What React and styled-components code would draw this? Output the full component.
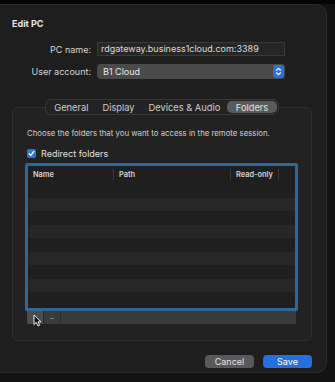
import React from 'react';
import styled, { createGlobalStyle } from 'styled-components';

const GlobalStyle = createGlobalStyle`
    html, body {
        margin: 0;
        padding: 0;
        background: #101010;
    }
    body {
        font-family: Inter, "Liberation Sans", sans-serif;
        color: #dedede;
        -webkit-font-smoothing: antialiased;
    }
`;

const Screen = styled.div`
    width: 335px;
    height: 382px;
    padding-top: 4px;
    box-sizing: border-box;
    background: linear-gradient(to bottom, #050505 0, #050505 4px, #121212 4px);
`;

const Window = styled.div`
    width: 327px;
    height: 369px;
    box-sizing: border-box;
    padding: 0 14px 0 12px;
    background: #1e1e1e;
    border: 1px solid #2c2c2c;
    border-left: none;
    border-radius: 0 11px 11px 0;
    display: flex;
    flex-direction: column;
`;

const Title = styled.div`
    margin-top: 13px;
    height: 12px;
    line-height: 12px;
    font-size: 9px;
    font-weight: 700;
    color: #e6e6e6;
`;

const Form = styled.div`
    margin-top: 12px;
    display: grid;
    grid-template-columns: 79px 188px;
    column-gap: 6px;
    row-gap: 8px;
    align-items: center;
`;

const Label = styled.div`
    text-align: right;
    font-size: 9px;
    color: #d6d6d6;
`;

const TextField = styled.div`
    height: 14px;
    box-sizing: border-box;
    padding: 0 3px;
    background: #262626;
    border: 1px solid #3a3a3a;
    font-size: 9px;
    line-height: 12px;
    color: #dcdcdc;
`;

const Popup = styled.div`
    height: 15px;
    box-sizing: border-box;
    padding: 0 1px 0 6px;
    background: #4a4a4a;
    border-radius: 4px;
    display: flex;
    align-items: center;
    justify-content: space-between;
    font-size: 9px;
    color: #e8e8e8;
`;

const Stepper = styled.div`
    width: 11px;
    height: 13px;
    border-radius: 3px;
    background: #2b6fe0;
    display: flex;
    align-items: center;
    justify-content: center;
`;

const TabWrap = styled.div`
    margin-top: 20px;
    display: flex;
    justify-content: center;
    position: relative;
    z-index: 1;
`;

const Tabs = styled.div`
    height: 16px;
    box-sizing: border-box;
    padding: 1px;
    display: flex;
    align-items: stretch;
    background: #232323;
    border: 1px solid #393939;
    border-radius: 6px;
`;

const Tab = styled.div`
    padding: 0 ${p => p.$pad || 7}px;
    display: flex;
    align-items: center;
    font-size: 9.3px;
    color: ${p => p.$active ? '#e2e2e2' : '#cdcdcd'};
    background: ${p => p.$active ? '#5b5b5b' : 'transparent'};
    border-radius: 5px;
`;

const GroupBox = styled.div`
    margin-top: -8px;
    height: 234px;
    box-sizing: border-box;
    padding: 20px 13px 0 12px;
    background: #222222;
    border: 1px solid #2f2f2f;
    border-radius: 6px;
    display: flex;
    flex-direction: column;
`;

const Hint = styled.div`
    padding-left: 2px;
    height: 10px;
    line-height: 10px;
    font-size: 7.8px;
    color: #cfcfcf;
    white-space: nowrap;
`;

const CheckRow = styled.div`
    margin-top: 9px;
    height: 12px;
    padding-left: 2px;
    display: flex;
    align-items: center;
    gap: 5px;
    font-size: 9px;
    color: #e0e0e0;
`;

const CheckBox = styled.div`
    width: 9px;
    height: 9px;
    border-radius: 2px;
    background: #2a76e0;
    display: flex;
    align-items: center;
    justify-content: center;
`;

const Table = styled.div`
    margin-top: 4px;
    height: 148px;
    box-sizing: border-box;
    border: 3px solid #2d689c;
    border-radius: 2px;
    background: #1f1f1f;
    overflow: hidden;
`;

const HeaderRow = styled.div`
    height: 18px;
    display: grid;
    grid-template-columns: 86px 117px 48px 1fr;
    align-items: start;
`;

const HeaderCell = styled.div`
    height: 11px;
    margin-top: 3px;
    padding-left: 5px;
    font-size: 7.4px;
    line-height: 11px;
    font-weight: 600;
    color: #d4d4d4;
    border-right: ${p => p.$last ? 'none' : '1px solid #3a3a3a'};
`;

const Row = styled.div`
    height: 13.5px;
    background: ${p => p.$odd ? '#272727' : '#1f1f1f'};
`;

const ButtonBar = styled.div`
    margin: 0 2px;
    height: 13px;
    display: flex;
    background: #3a3a3a;
    position: relative;
`;

const BarButton = styled.div`
    width: 16px;
    display: flex;
    align-items: center;
    justify-content: center;
    font-size: 9px;
    color: #8a8a8a;
    background: ${p => p.$hover ? '#4c4c4c' : '#3a3a3a'};
    border-right: 1px solid #2c2c2c;
`;

const Cursor = styled.svg`
    position: absolute;
    left: 6px;
    top: 3px;
`;

const Footer = styled.div`
    margin-top: 14px;
    display: flex;
    justify-content: flex-end;
    gap: 9px;
`;

const Button = styled.div`
    width: 49px;
    height: 13px;
    border-radius: 4px;
    display: flex;
    align-items: center;
    justify-content: center;
    font-size: 9px;
    color: ${p => p.$primary ? '#ffffff' : '#e4e4e4'};
    background: ${p => p.$primary ? '#2470e0' : '#595959'};
`;

const App = () => {
    const rows = Array.from({ length: 9 });
    return (
        <>
            <GlobalStyle />
            <Screen>
                <Window>
                    <Title>Edit PC</Title>
                    <Form>
                        <Label>PC name:</Label>
                        <TextField>rdgateway.business1cloud.com:3389</TextField>
                        <Label>User account:</Label>
                        <Popup>
                            <span>B1 Cloud</span>
                            <Stepper>
                                <svg width="7" height="9" viewBox="0 0 7 9" fill="none" stroke="#fff" strokeWidth="1.2" strokeLinecap="round" strokeLinejoin="round">
                                    <path d="M1.5 3.2 L3.5 1.4 L5.5 3.2" />
                                    <path d="M1.5 5.8 L3.5 7.6 L5.5 5.8" />
                                </svg>
                            </Stepper>
                        </Popup>
                    </Form>
                    <TabWrap>
                        <Tabs>
                            <Tab $pad={7}>General</Tab>
                            <Tab $pad={7}>Display</Tab>
                            <Tab $pad={7}>Devices &amp; Audio</Tab>
                            <Tab $active $pad={8.5}>Folders</Tab>
                        </Tabs>
                    </TabWrap>
                    <GroupBox>
                        <Hint>Choose the folders that you want to access in the remote session.</Hint>
                        <CheckRow>
                            <CheckBox>
                                <svg width="7" height="7" viewBox="0 0 7 7" fill="none" stroke="#fff" strokeWidth="1.3" strokeLinecap="round" strokeLinejoin="round">
                                    <path d="M1.2 3.7 L2.8 5.3 L5.8 1.5" />
                                </svg>
                            </CheckBox>
                            <span>Redirect folders</span>
                        </CheckRow>
                        <Table>
                            <HeaderRow>
                                <HeaderCell>Name</HeaderCell>
                                <HeaderCell>Path</HeaderCell>
                                <HeaderCell>Read-only</HeaderCell>
                                <HeaderCell $last />
                            </HeaderRow>
                            {rows.map((_, i) => <Row key={i} $odd={i % 2 === 1} />)}
                        </Table>
                        <ButtonBar>
                            <BarButton $hover>+</BarButton>
                            <BarButton>−</BarButton>
                            <Cursor width="9" height="13" viewBox="0 0 9 13">
                                <path d="M1 1 L1 10.5 L3.3 8.4 L5 12 L6.6 11.3 L5 7.8 L8 7.8 Z" fill="#111" stroke="#fff" strokeWidth="0.9" strokeLinejoin="round" />
                            </Cursor>
                        </ButtonBar>
                    </GroupBox>
                    <Footer>
                        <Button>Cancel</Button>
                        <Button $primary>Save</Button>
                    </Footer>
                </Window>
            </Screen>
        </>
    );
};

export default App;
